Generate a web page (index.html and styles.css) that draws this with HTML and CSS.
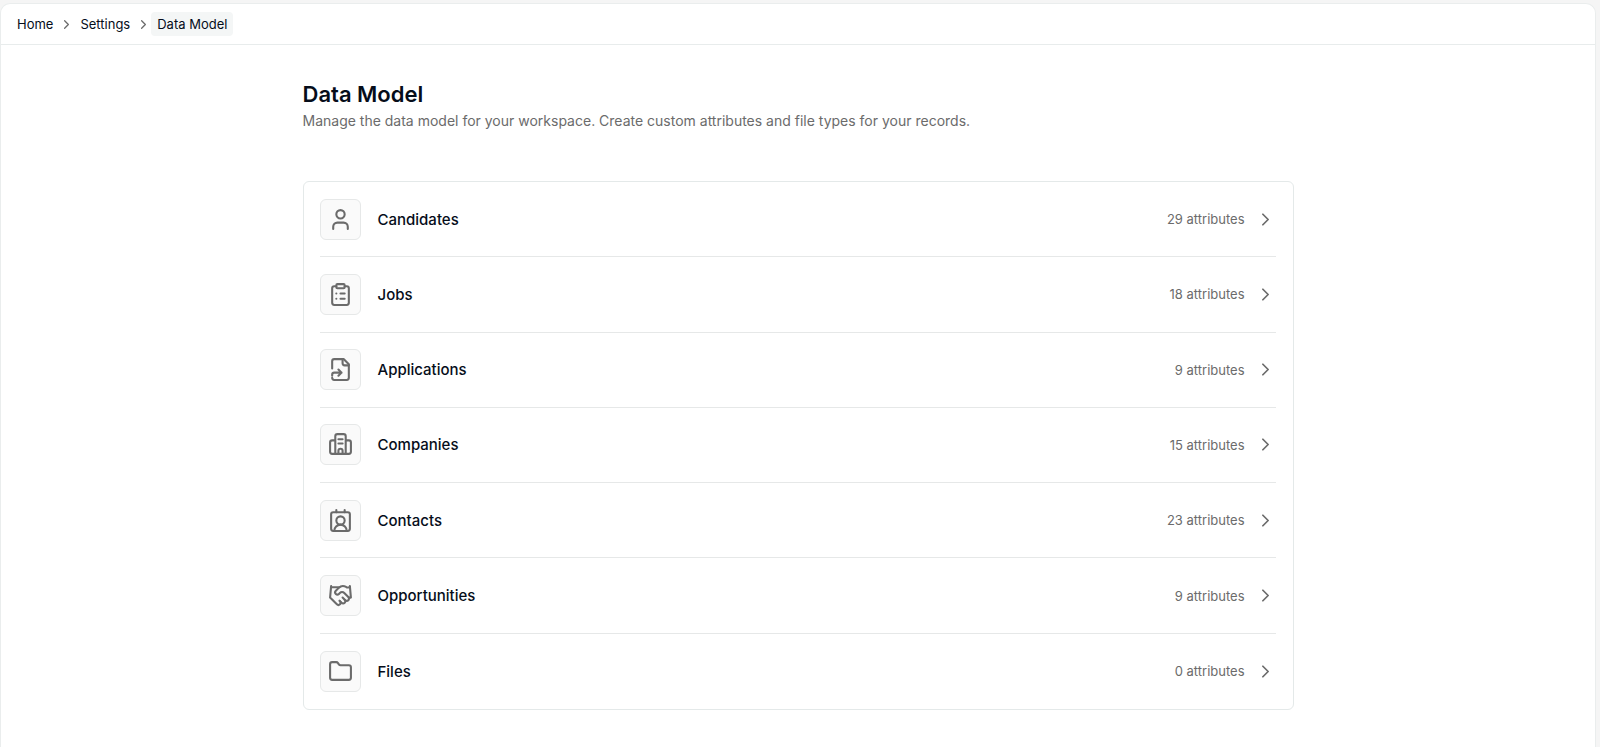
FILE: index.html
```
<!DOCTYPE html>
<html lang="en">
<head>
  <meta charset="UTF-8" />
  <meta name="viewport" content="width=device-width, initial-scale=1.0" />
  <title>Data Model</title>
  <link rel="stylesheet" href="styles.css">
</head>
<body>
  <div class="panel">
    <nav class="breadcrumb" aria-label="Breadcrumb">
      <a href="#">Home</a>
      <svg class="sep" viewBox="0 0 24 24"><path d="m9 18 6-6-6-6"/></svg>
      <a href="#">Settings</a>
      <svg class="sep" viewBox="0 0 24 24"><path d="m9 18 6-6-6-6"/></svg>
      <a href="#" class="current">Data Model</a>
    </nav>

    <main class="content">
      <h1>Data Model</h1>
      <p class="intro">Manage the data model for your workspace. Create custom attributes and file types for your records.</p>

      <div class="list">
        <a href="#" class="row">
          <span class="icon"><svg viewBox="0 0 24 24"><circle cx="12" cy="7" r="4"/><path d="M19 21v-2a4 4 0 0 0-4-4H9a4 4 0 0 0-4 4v2"/></svg></span>
          <span class="name">Candidates</span>
          <span class="count">29 attributes</span>
          <svg class="arrow" viewBox="0 0 24 24"><path d="m9 18 6-6-6-6"/></svg>
        </a>
        <a href="#" class="row">
          <span class="icon"><svg viewBox="0 0 24 24"><rect x="8" y="2" width="8" height="4" rx="1"/><path d="M16 4h2a2 2 0 0 1 2 2v14a2 2 0 0 1-2 2H6a2 2 0 0 1-2-2V6a2 2 0 0 1 2-2h2M12 11h4M12 16h4M8 11h.01M8 16h.01"/></svg></span>
          <span class="name">Jobs</span>
          <span class="count">18 attributes</span>
          <svg class="arrow" viewBox="0 0 24 24"><path d="m9 18 6-6-6-6"/></svg>
        </a>
        <a href="#" class="row">
          <span class="icon"><svg viewBox="0 0 24 24"><path d="M4 11V4a2 2 0 0 1 2-2h9l5 5v13a2 2 0 0 1-2 2H6a2 2 0 0 1-2-2"/><path d="M14 2v4a2 2 0 0 0 2 2h4M4 18v-1a2 2 0 0 1 2-2h7M10 18l3-3-3-3"/></svg></span>
          <span class="name">Applications</span>
          <span class="count">9 attributes</span>
          <svg class="arrow" viewBox="0 0 24 24"><path d="m9 18 6-6-6-6"/></svg>
        </a>
        <a href="#" class="row">
          <span class="icon"><svg viewBox="0 0 24 24"><path d="M7 21V4a2 2 0 0 1 2-2h6a2 2 0 0 1 2 2v17M7 8H4a2 2 0 0 0-2 2v9a2 2 0 0 0 2 2h16a2 2 0 0 0 2-2v-9a2 2 0 0 0-2-2h-3M10 7h4M10 11h4M10 21v-3a2 2 0 0 1 4 0v3"/></svg></span>
          <span class="name">Companies</span>
          <span class="count">15 attributes</span>
          <svg class="arrow" viewBox="0 0 24 24"><path d="m9 18 6-6-6-6"/></svg>
        </a>
        <a href="#" class="row">
          <span class="icon"><svg viewBox="0 0 24 24"><rect x="3" y="4" width="18" height="18" rx="2"/><circle cx="12" cy="12" r="4"/><path d="M18 22a6 6 0 0 0-12 0M8 2v2M16 2v2"/></svg></span>
          <span class="name">Contacts</span>
          <span class="count">23 attributes</span>
          <svg class="arrow" viewBox="0 0 24 24"><path d="m9 18 6-6-6-6"/></svg>
        </a>
        <a href="#" class="row">
          <span class="icon"><svg viewBox="0 0 24 24"><path d="m11 17 2 2a1 1 0 1 0 3-3"/><path d="m14 14 2.5 2.5a1 1 0 1 0 3-3l-3.880-3.880a3 3 0 0 0-4.240 0l-.880.880a1 1 0 1 1-3-3l2.810-2.810a5.790 5.790 0 0 1 7.060-.870l.470.280a2 2 0 0 0 1.420.250L21 4"/><path d="m21 3 1 11h-2M3 3 2 14l6.500 6.500a1 1 0 1 0 3-3M3 4h8"/></svg></span>
          <span class="name">Opportunities</span>
          <span class="count">9 attributes</span>
          <svg class="arrow" viewBox="0 0 24 24"><path d="m9 18 6-6-6-6"/></svg>
        </a>
        <a href="#" class="row">
          <span class="icon"><svg viewBox="0 0 24 24"><path d="M20 20a2 2 0 0 0 2-2V8a2 2 0 0 0-2-2h-7.900a2 2 0 0 1-1.690-.9L9.600 3.900A2 2 0 0 0 7.930 3H4a2 2 0 0 0-2 2v13a2 2 0 0 0 2 2Z"/></svg></span>
          <span class="name">Files</span>
          <span class="count">0 attributes</span>
          <svg class="arrow" viewBox="0 0 24 24"><path d="m9 18 6-6-6-6"/></svg>
        </a>
      </div>
    </main>
  </div>
</body>
</html>
```

FILE: styles.css
```
* {
  box-sizing: border-box;
}
body {
  margin: 0;
  padding: 3px 4px 0 0;
  min-height: 100vh;
  display: flex;
  font-family: Inter, sans-serif;
  background: #f5f5f5;
  color: #060d1a;
}
a {
  color: inherit;
  text-decoration: none;
}
svg {
  fill: none;
  stroke: #6b6b6b;
  stroke-width: 2;
  stroke-linecap: round;
  stroke-linejoin: round;
}
.panel {
  flex: 1;
  background: #fff;
  border: 1px solid #eaeded;
  border-bottom: 0;
  border-radius: 10px 10px 0 0;
}

/* top bar */
.breadcrumb {
  display: flex;
  align-items: center;
  height: 41px;
  padding: 0 10px;
  border-bottom: 1px solid #e8ecec;
  font-size: 13px;
}
.breadcrumb a {
  padding: 4px 6px;
  line-height: 16px;
  border-radius: 4px;
}
.breadcrumb .current {
  background: #f4f6f6;
}
.sep {
  width: 15px;
  height: 15px;
}

.content {
  max-width: 991px;
  margin: 0 auto;
  padding-top: 34px;
}
h1 {
  margin: 0;
  font-size: 22px;
  font-weight: 600;
  line-height: 30px;
}
.intro {
  margin: 0;
  font-size: 14px;
  line-height: 24px;
  color: #6b6b6b;
}

/* object list */
.list {
  display: grid;
  grid-auto-rows: 1fr;
  min-height: 529px;
  margin-top: 48px;
  padding: 0 17px 0 16px;
  border: 1px solid #e4e9e9;
  border-radius: 6px;
}
.row {
  display: flex;
  align-items: center;
  border-bottom: 1px solid #e6e8e8;
}
.row:last-child {
  border-bottom: 0;
}
.icon {
  display: grid;
  place-items: center;
  width: 41px;
  height: 41px;
  margin-right: 17px;
  background: #fafafa;
  border: 1px solid #e6e8e8;
  border-radius: 6px;
}
.icon svg {
  width: 25px;
  height: 25px;
}
.name {
  flex: 1;
  font-size: 15px;
  font-weight: 500;
}
.count {
  margin-right: 10px;
  font-size: 13px;
  color: #6b6b6b;
}
.arrow {
  width: 21px;
  height: 21px;
}
```
